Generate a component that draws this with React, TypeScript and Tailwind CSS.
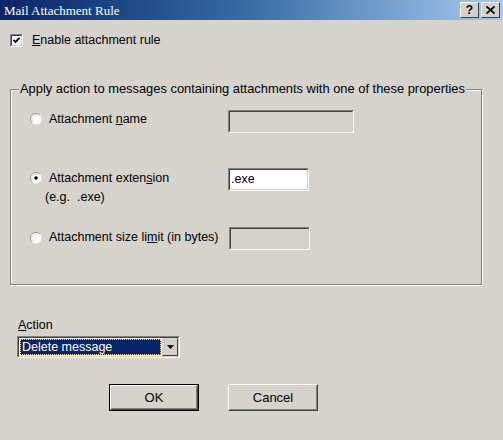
import React from 'react';

const ui = { fontFamily: '"Liberation Sans", Arial, sans-serif' };

function Radio({ checked }: { checked?: boolean }) {
  return (
    <svg width="12" height="12" viewBox="0 0 12 12" className="shrink-0">
      <circle cx="6" cy="6" r="5.5" fill="#ffffff" />
      <path d="M10 2 A5.5 5.5 0 0 0 2 10" stroke="#a0a0a0" strokeWidth="1" fill="none" />
      <path d="M9 3 A4.2 4.2 0 0 0 3 9" stroke="#d0d0d0" strokeWidth="1" fill="none" />
      {checked && <circle cx="6" cy="6" r="1.8" fill="#000000" />}
    </svg>
  );
}

function Sunken({ className, children }: { className?: string; children?: React.ReactNode }) {
  return (
    <div className={`border border-t-[#808080] border-l-[#808080] border-b-white border-r-white ${className ?? ''}`}>
      <div className="h-full w-full border border-t-[#404040] border-l-[#404040] border-b-[#d4d0c8] border-r-[#d4d0c8]">
        {children}
      </div>
    </div>
  );
}

function Button({ label, isDefault }: { label: string; isDefault?: boolean }) {
  return (
    <div className={`w-[90px] h-[27px] ${isDefault ? 'border border-black' : ''}`}>
      <div className="h-full w-full border border-t-white border-l-white border-b-[#404040] border-r-[#404040]">
        <div className="h-full w-full border border-t-[#d4d0c8] border-l-[#d4d0c8] border-b-[#808080] border-r-[#808080] flex items-center justify-center text-[13px] text-black">
          {label}
        </div>
      </div>
    </div>
  );
}

function TitleButton({ children }: { children: React.ReactNode }) {
  return (
    <div className="w-[19px] h-[16px] bg-[#d4d0c8] border border-t-white border-l-white border-b-[#404040] border-r-[#404040] flex items-center justify-center">
      {children}
    </div>
  );
}

export default function App() {
  return (
    <div className="w-[503px] h-[440px] bg-[#d6d2cc] overflow-hidden text-[12.5px] text-black" style={ui}>
      {/* Title bar */}
      <div className="h-[20px] flex items-center justify-between pl-[4px] pr-[3px] bg-gradient-to-r from-[#0a246a] via-[#3a6ea5] to-[#a6caf0]">
        <span className="text-white text-[13px] leading-none" style={{ fontFamily: '"Liberation Serif", "Times New Roman", serif' }}>
          Mail Attachment Rule
        </span>
        <div className="flex items-center gap-[2px]">
          <TitleButton>
            <span className="text-[12px] font-bold leading-none text-black">?</span>
          </TitleButton>
          <TitleButton>
            <svg width="9" height="8" viewBox="0 0 9 8">
              <path d="M0.5 0.5 L8.5 7.5 M8.5 0.5 L0.5 7.5" stroke="#000" strokeWidth="1.8" />
            </svg>
          </TitleButton>
        </div>
      </div>

      {/* Enable checkbox */}
      <div className="mt-[14px] ml-[10px] flex items-center gap-[9px] h-[13px]">
        <Sunken className="w-[13px] h-[13px] bg-white">
          <div className="w-full h-full bg-white flex items-center justify-center">
            <svg width="7" height="7" viewBox="0 0 7 7">
              <path d="M0.5 3 L2.5 5 L6.5 1" stroke="#000" strokeWidth="1.8" fill="none" />
            </svg>
          </div>
        </Sunken>
        <span>
          <u>E</u>nable attachment rule
        </span>
      </div>

      {/* Group box */}
      <div className="relative mt-[42px] ml-[10px] w-[472px] h-[196px] border border-[#808080] shadow-[inset_1px_1px_0_#ffffff,1px_1px_0_#ffffff] pl-[19px] pt-[20px]">
        <span className="absolute left-[8px] top-[-8px] px-[1px] bg-[#d6d2cc] leading-[14px] text-[12.9px]">
          Apply action to messages containing attachments with one of these properties
        </span>

        <div className="flex items-center h-[23px]">
          <div className="w-[198px] mb-[5px] flex items-center gap-[7px]">
            <Radio />
            <span>
              Attachment <u>n</u>ame
            </span>
          </div>
          <Sunken className="w-[126px] h-[23px]" />
        </div>

        <div className="mt-[35px] flex items-center h-[23px]">
          <div className="w-[198px] mb-[3px] flex items-center gap-[7px]">
            <Radio checked />
            <span>
              Attachment exten<u>s</u>ion
            </span>
          </div>
          <Sunken className="w-[81px] h-[23px] bg-white">
            <div className="h-full bg-white pl-[1px] leading-[19px] text-[12.5px]">.exe</div>
          </Sunken>
        </div>
        <div className="ml-[15px] mt-[-1px] leading-[14px]">(e.g.&nbsp;&nbsp;.exe)</div>

        <div className="mt-[23px] flex items-center h-[23px]">
          <div className="w-[199px] mb-[2px] flex items-center gap-[7px]">
            <Radio />
            <span>
              Attachment size li<u>m</u>it (in bytes)
            </span>
          </div>
          <Sunken className="w-[81px] h-[23px]" />
        </div>
      </div>

      {/* Action */}
      <div className="mt-[33px] ml-[18px] leading-[14px]">
        <u>A</u>ction
      </div>
      <div className="mt-[4px] ml-[17px] w-[163px] h-[22px]">
        <Sunken className="w-full h-full bg-white">
          <div className="flex h-full bg-white">
            <div className="flex-1 p-[1px]">
              <div className="h-full bg-[#0a246a] text-white outline outline-1 outline-dotted outline-[#f0d890] -outline-offset-1 pl-[2px] leading-[16px] text-[12.5px]">
                Delete message
              </div>
            </div>
            <div className="w-[16px] h-full bg-[#d4d0c8] border border-t-[#d4d0c8] border-l-[#d4d0c8] border-b-[#404040] border-r-[#404040] flex items-center justify-center">
              <svg width="7" height="4" viewBox="0 0 7 4">
                <path d="M0 0 L7 0 L3.5 4 Z" fill="#000" />
              </svg>
            </div>
          </div>
        </Sunken>
      </div>

      {/* Buttons */}
      <div className="mt-[26px] ml-[109px] flex gap-[29px]">
        <Button label="OK" isDefault />
        <Button label="Cancel" />
      </div>
    </div>
  );
}
